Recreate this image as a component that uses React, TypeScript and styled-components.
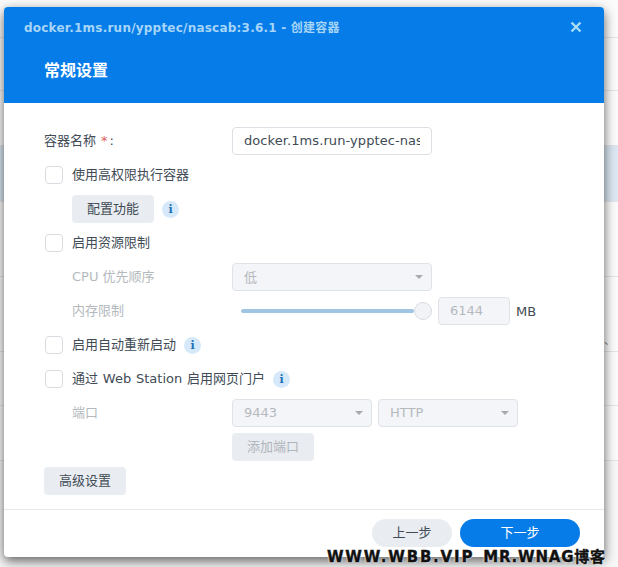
import React from 'react'
import styled, { createGlobalStyle } from 'styled-components'

const fontStack = `'DejaVu Sans', 'Noto Sans CJK SC', sans-serif`

const GlobalStyle = createGlobalStyle`
  html, body {
    margin: 0;
    padding: 0;
    background: #fff;
  }
  body {
    width: 618px;
    height: 567px;
    overflow: hidden;
    font-family: ${fontStack};
  }
`

const Page = styled.div`
  position: relative;
  width: 618px;
  height: 567px;
  overflow: hidden;
`

const Backdrop = styled.div`
  display: flex;
  flex-direction: column;
  height: 100%;
  background: #f7f7f7;
`

const BackdropRow = styled.div<{ $h: number; $selected?: boolean }>`
  height: ${(props) => props.$h}px;
  flex: none;
  box-sizing: border-box;
  display: flex;
  align-items: flex-end;
  padding: 0 0 4px 604px;
  border-bottom: 1px solid #e2e5e8;
  background: ${(props) => (props.$selected ? '#dbe7f2' : '#fbfbfb')};
  color: #6b747c;
  font-size: 11px;
  white-space: nowrap;
`

const Dialog = styled.div`
  position: absolute;
  left: 4px;
  top: 7px;
  width: 600px;
  height: 550px;
  display: flex;
  flex-direction: column;
  background: #fff;
  border-radius: 4px;
  box-shadow: 0 4px 12px rgba(0, 0, 0, 0.62);
  overflow: hidden;
`

const Header = styled.div`
  height: 96px;
  flex: none;
  box-sizing: border-box;
  background: #057ce8;
  padding: 0 20px;
`

const TitleBar = styled.div`
  height: 40px;
  display: flex;
  align-items: center;
  justify-content: space-between;
`

const WindowTitle = styled.div`
  font-size: 12px;
  font-weight: 700;
  letter-spacing: 0.22px;
  color: #a6d5f8;
  margin-top: -1px;
`

const CloseButton = styled.div`
  display: flex;
  margin-right: 2px;
  margin-top: -1px;
  color: #a9dcfa;
`

const StepTitle = styled.div`
  margin: 13px 0 0 20px;
  font-size: 16px;
  font-weight: 700;
  line-height: 22px;
  color: #fff;
`

const Body = styled.div`
  flex: 1;
  display: flex;
  flex-direction: column;
  gap: 6px;
  padding: 24px 40px 0;
`

const Row = styled.div<{ $indent?: boolean }>`
  display: flex;
  align-items: center;
  height: 28px;
  padding-left: ${(props) => (props.$indent ? 28 : 0)}px;
  font-size: 13px;
  color: #414b55;
`

const FieldLabel = styled.div<{ $disabled?: boolean; $indent?: boolean }>`
  width: ${(props) => (props.$indent ? 160 : 188)}px;
  flex: none;
  margin-top: -3px;
  color: ${(props) => (props.$disabled ? '#b4b9be' : '#414b55')};
`

const Required = styled.span`
  color: #e0605a;
  margin: 0 2px 0 5px;
`

const TextBox = styled.div<{ $w: number; $disabled?: boolean }>`
  width: ${(props) => props.$w}px;
  height: 28px;
  flex: none;
  box-sizing: border-box;
  display: flex;
  align-items: center;
  padding: 0 11px 1px;
  border: 1px solid ${(props) => (props.$disabled ? '#dfe3e8' : '#dcdfe3')};
  border-radius: 4px;
  background: ${(props) => (props.$disabled ? '#f4f5f8' : '#fff')};
  color: ${(props) => (props.$disabled ? '#b4b9be' : '#414b55')};
  font-size: 13px;
  white-space: nowrap;
`

const InputText = styled.span`
  flex: 1;
  overflow: hidden;
  letter-spacing: 0.08px;
`

const SelectBox = styled(TextBox)`
  justify-content: space-between;
  padding-right: 8px;
`

const Caret = styled.span`
  width: 0;
  height: 0;
  border-left: 4px solid transparent;
  border-right: 4px solid transparent;
  border-top: 4px solid #a6abb1;
`

const CheckRow = styled(Row)`
  padding-left: 1px;
`

const CheckBox = styled.span`
  width: 18px;
  height: 18px;
  flex: none;
  box-sizing: border-box;
  border: 1px solid #d8dce0;
  border-radius: 4px;
  background: #fff;
`

const CheckText = styled.span`
  margin: -3px 0 0 9px;
  word-spacing: 0.7px;
`

const InfoBadge = styled.span`
  width: 17px;
  height: 17px;
  margin-left: 8px;
  flex: none;
  display: flex;
  align-items: center;
  justify-content: center;
  border-radius: 50%;
  background: #d6e9fa;
  color: #1c6fb4;
  font-family: 'DejaVu Serif', serif;
  font-size: 11px;
  font-weight: 700;
`

const Button = styled.div<{ $disabled?: boolean }>`
  width: 82px;
  height: 28px;
  flex: none;
  box-sizing: border-box;
  padding-bottom: 3px;
  display: flex;
  align-items: center;
  justify-content: center;
  border-radius: 4px;
  background: ${(props) => (props.$disabled ? '#e9ecf1' : '#e9edf2')};
  color: ${(props) => (props.$disabled ? '#b0b5bb' : '#414b55')};
  font-size: 13px;
`

const Controls = styled.div`
  display: flex;
  align-items: center;
  gap: 6px;
`

const Slider = styled.div`
  width: 191px;
  margin: 0 6px 0 9px;
  height: 18px;
  flex: none;
  display: flex;
  align-items: center;
`

const SliderTrack = styled.div`
  flex: 1;
  height: 4px;
  border-radius: 2px;
  background: #9fc5e3;
`

const SliderThumb = styled.div`
  width: 18px;
  height: 18px;
  box-sizing: border-box;
  border: 1px solid #d8dce3;
  border-radius: 50%;
  background: #f1f3f7;
`

const Unit = styled.span`
  color: #414b55;
  font-size: 13px;
`

const Footer = styled.div`
  height: 48px;
  flex: none;
  box-sizing: border-box;
  display: flex;
  align-items: flex-start;
  justify-content: flex-end;
  gap: 8px;
  padding: 9px 24px 0 0;
  border-top: 1px solid #e6e8eb;
`

const PillButton = styled.div<{ $primary?: boolean }>`
  width: ${(props) => (props.$primary ? 120 : 80)}px;
  height: 28px;
  box-sizing: border-box;
  padding-bottom: 3px;
  display: flex;
  align-items: center;
  justify-content: center;
  border-radius: 14px;
  background: ${(props) => (props.$primary ? '#057ce8' : '#e9edf2')};
  color: ${(props) => (props.$primary ? '#fff' : '#414b55')};
  font-size: 13px;
`

const Watermark = styled.div`
  position: absolute;
  left: 327px;
  top: 548px;
  display: flex;
  gap: 9px;
  font-family: 'DejaVu Sans', 'Noto Sans CJK SC', sans-serif;
  font-size: 15px;
  line-height: 18px;
  font-weight: 700;
  white-space: pre;
  color: #111;
  -webkit-text-stroke: 0.4px #111;
  text-shadow: 0 0 2px #fff, 0 0 2px #fff;
`

const WatermarkPart = styled.span<{ $spacing: number }>`
  letter-spacing: ${(props) => props.$spacing}px;
`

const backdropRows = [
  { h: 38 },
  { h: 53 },
  { h: 55 },
  { h: 56, selected: true },
  { h: 75 },
  { h: 75, text: '、' },
  { h: 54 },
  { h: 55 },
]

const App = () => {
  return (
    <Page>
      <GlobalStyle />
      <Backdrop>
        {backdropRows.map((row, i) => (
          <BackdropRow key={i} $h={row.h} $selected={row.selected}>
            {row.text}
          </BackdropRow>
        ))}
      </Backdrop>

      <Dialog>
        <Header>
          <TitleBar>
            <WindowTitle>docker.1ms.run/ypptec/nascab:3.6.1 - 创建容器</WindowTitle>
            <CloseButton>
              <svg width='12' height='12' viewBox='0 0 12 12'>
                <path d='M1.5 1.5l9 9M10.5 1.5l-9 9' stroke='currentColor' strokeWidth='2.4' />
              </svg>
            </CloseButton>
          </TitleBar>
          <StepTitle>常规设置</StepTitle>
        </Header>

        <Body>
          <Row>
            <FieldLabel>
              容器名称<Required>*</Required>:
            </FieldLabel>
            <TextBox $w={200}>
              <InputText>docker.1ms.run-ypptec-nascab</InputText>
            </TextBox>
          </Row>

          <CheckRow>
            <CheckBox />
            <CheckText>使用高权限执行容器</CheckText>
          </CheckRow>

          <Row $indent>
            <Button>配置功能</Button>
            <InfoBadge>i</InfoBadge>
          </Row>

          <CheckRow>
            <CheckBox />
            <CheckText>启用资源限制</CheckText>
          </CheckRow>

          <Row $indent>
            <FieldLabel $disabled $indent>
              CPU 优先顺序
            </FieldLabel>
            <SelectBox $w={200} $disabled>
              低<Caret />
            </SelectBox>
          </Row>

          <Row $indent>
            <FieldLabel $disabled $indent>
              内存限制
            </FieldLabel>
            <Slider>
              <SliderTrack />
              <SliderThumb />
            </Slider>
            <Controls>
              <TextBox $w={72} $disabled>
                6144
              </TextBox>
              <Unit>MB</Unit>
            </Controls>
          </Row>

          <CheckRow>
            <CheckBox />
            <CheckText>启用自动重新启动</CheckText>
            <InfoBadge>i</InfoBadge>
          </CheckRow>

          <CheckRow>
            <CheckBox />
            <CheckText>通过 Web Station 启用网页门户</CheckText>
            <InfoBadge>i</InfoBadge>
          </CheckRow>

          <Row $indent>
            <FieldLabel $disabled $indent>
              端口
            </FieldLabel>
            <Controls>
              <SelectBox $w={140} $disabled>
                9443
                <Caret />
              </SelectBox>
              <SelectBox $w={140} $disabled>
                HTTP
                <Caret />
              </SelectBox>
            </Controls>
          </Row>

          <Row $indent>
            <FieldLabel $indent />
            <Button $disabled>添加端口</Button>
          </Row>

          <Row>
            <Button>高级设置</Button>
          </Row>
        </Body>

        <Footer>
          <PillButton>上一步</PillButton>
          <PillButton $primary>下一步</PillButton>
        </Footer>
      </Dialog>

      <Watermark>
        <WatermarkPart $spacing={1.8}>WWW.WBB.VIP</WatermarkPart>
        <WatermarkPart $spacing={0.8}>MR.WNAG博客</WatermarkPart>
      </Watermark>
    </Page>
  )
}

export default App
